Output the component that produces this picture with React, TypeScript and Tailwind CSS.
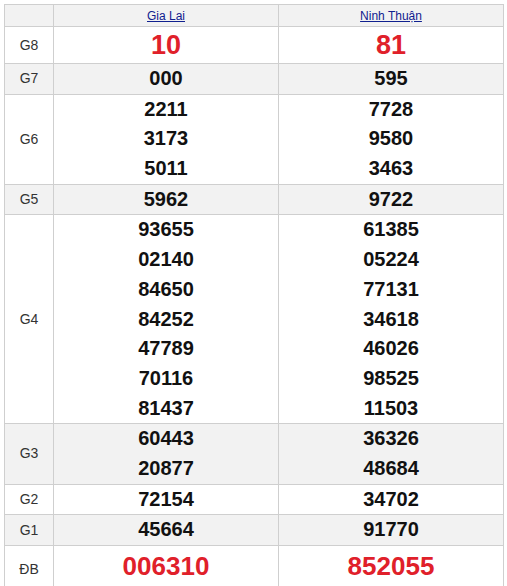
const ROWS: { label: string; a: string[]; b: string[]; kind?: "g8" | "db" }[] = [
  { label: "G8", a: ["10"], b: ["81"], kind: "g8" },
  { label: "G7", a: ["000"], b: ["595"] },
  { label: "G6", a: ["2211", "3173", "5011"], b: ["7728", "9580", "3463"] },
  { label: "G5", a: ["5962"], b: ["9722"] },
  {
    label: "G4",
    a: ["93655", "02140", "84650", "84252", "47789", "70116", "81437"],
    b: ["61385", "05224", "77131", "34618", "46026", "98525", "11503"],
  },
  { label: "G3", a: ["60443", "20877"], b: ["36326", "48684"] },
  { label: "G2", a: ["72154"], b: ["34702"] },
  { label: "G1", a: ["45664"], b: ["91770"] },
  { label: "ĐB", a: ["006310"], b: ["852055"], kind: "db" },
];

function Cell({ nums, kind }: { nums: string[]; kind?: "g8" | "db" }) {
  if (kind === "g8") {
    return <div className="h-[36px] leading-[36px] text-[27px] font-bold text-[#e0202a]">{nums[0]}</div>;
  }
  if (kind === "db") {
    return <div className="h-[41px] leading-[41px] mb-[6px] text-[26px] font-bold text-[#e0202a]">{nums[0]}</div>;
  }
  return (
    <>
      {nums.map((n, i) => (
        <div key={i} className="h-[29.7px] leading-[29.7px] text-[20px] font-bold text-[#111]">
          {n}
        </div>
      ))}
    </>
  );
}

export default function App() {
  return (
    <div className="bg-white w-[507px] h-[586px] overflow-hidden pt-[4px] pl-[4px] font-['Liberation_Sans',Arial,sans-serif]">
      <table className="border-collapse w-[499px] table-fixed">
        <colgroup>
          <col className="w-[49px]" />
          <col className="w-[225px]" />
          <col className="w-[225px]" />
        </colgroup>
        <thead>
          <tr className="bg-[#f2f2f2]">
            <th className="border border-[#cfcfcf] h-[22px] p-0"></th>
            <th className="border border-[#cfcfcf] h-[22px] p-0 text-center font-normal leading-[20px]">
              <a className="text-[12px] text-[#10208f] underline">Gia Lai</a>
            </th>
            <th className="border border-[#cfcfcf] h-[22px] p-0 text-center font-normal leading-[20px]">
              <a className="text-[12px] text-[#10208f] underline">Ninh Thuận</a>
            </th>
          </tr>
        </thead>
        <tbody>
          {ROWS.map((r, i) => (
            <tr key={r.label} className={i % 2 === 1 ? "bg-[#f2f2f2]" : "bg-white"}>
              <td className="border border-[#cfcfcf] p-0 text-center text-[14px] text-[#333]">{r.label}</td>
              <td className="border border-[#cfcfcf] p-0 text-center">
                <Cell nums={r.a} kind={r.kind} />
              </td>
              <td className="border border-[#cfcfcf] p-0 text-center">
                <Cell nums={r.b} kind={r.kind} />
              </td>
            </tr>
          ))}
        </tbody>
      </table>
    </div>
  );
}
